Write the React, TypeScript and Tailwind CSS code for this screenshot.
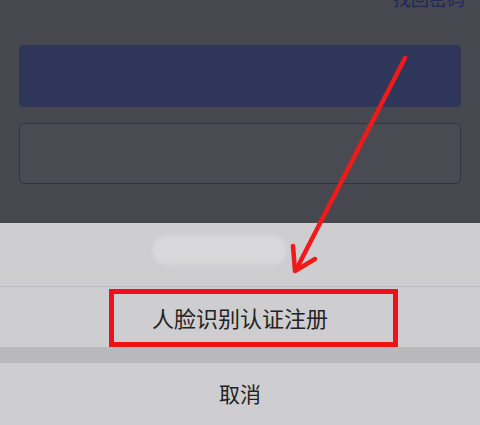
import React from "react";

const font = { fontFamily: '"Noto Sans CJK SC", "Noto Sans", sans-serif' };

function Arrow() {
  return (
    <svg
      className="pointer-events-none absolute left-0 top-0"
      width="480"
      height="425"
      viewBox="0 0 480 425"
    >
      <line x1="405" y1="58" x2="297" y2="268" stroke="#f01a1a" strokeWidth="4.5" strokeLinecap="round" />
      <polyline
        points="293,246 295,271 315,259"
        fill="none"
        stroke="#f01a1a"
        strokeWidth="4.5"
        strokeLinecap="round"
        strokeLinejoin="round"
      />
    </svg>
  );
}

export default function App() {
  return (
    <div className="relative h-[425px] w-[480px] overflow-hidden bg-[#47474f]" style={font}>
      {/* dimmed login page behind the sheet */}
      <div className="flex h-[223px] flex-col px-[19px]">
        <div className="-mr-[4px] -mt-[12px] flex h-[20px] justify-end text-[18px] leading-[20px] text-[#202a58]">
          找回密码
        </div>
        <div className="mt-[37px] h-[62px] rounded-[5px] bg-[#2e3759]" />
        <div className="mt-[16px] h-[61px] rounded-[5px] border border-[#33343f] bg-[#4a4a53]" />
      </div>

      {/* action sheet */}
      <div className="flex h-[202px] flex-col bg-[#cecdd0]">
        <div className="ml-[152px] mt-[12px] h-[30px] w-[135px] rounded-full bg-[#d8d7da] blur-[2px]" />
        <div className="mt-[21px] h-px bg-[#bcbbc0]" />
        <div className="relative flex h-[60px] items-center justify-center text-[22px] text-[#232323]">
          人脸识别认证注册
          <div className="absolute left-[109px] top-[2px] h-[58px] w-[289px] border-[5px] border-[#ec1219]" />
        </div>
        <div className="h-[16px] bg-[#b9b8bd]" />
        <div className="flex flex-1 items-center justify-center text-[21px] text-[#232323]">
          取消
        </div>
      </div>

      <Arrow />
    </div>
  );
}
